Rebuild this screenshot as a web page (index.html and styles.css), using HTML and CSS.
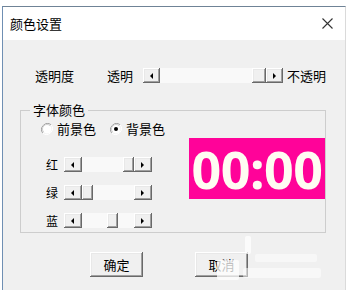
FILE: index.html
```html
<!DOCTYPE html>
<html lang="zh-CN">
<head>
    <meta charset="UTF-8">
    <title>颜色设置</title>
    <link rel="stylesheet" href="styles.css">
</head>
<body>
<div class="window">
    <div class="titlebar">
        <span class="title">颜色设置</span>
        <span class="close">
            <svg width="11" height="11" viewBox="0 0 11 11"><path d="M0.5 0.5L10.5 10.5M10.5 0.5L0.5 10.5" stroke="#333" stroke-width="1.1" fill="none"/></svg>
        </span>
    </div>
    <div class="content">
        <!--透明度-->
        <div class="opacity-row">
            <span class="opacity-label">透明度</span>
            <span class="end-label">透明</span>
            <div class="scrollbar wide">
                <span class="sb-btn"><i class="arrow-left"></i></span>
                <span class="track"><span class="thumb thumb-end"></span></span>
                <span class="sb-btn"><i class="arrow-right"></i></span>
            </div>
            <span class="end-label after">不透明</span>
        </div>
        <!--字体颜色-->
        <fieldset class="group">
            <legend>字体颜色</legend>
            <div class="group-body">
                <div class="controls">
                    <div class="radios">
                        <label class="radio">
                            <svg width="12" height="12" viewBox="0 0 12 12">
                                <path d="M10.2 1.8A6 6 0 0 0 1.8 10.2" stroke="#a0a0a0" fill="none"/>
                                <path d="M1.8 10.2A6 6 0 0 0 10.2 1.8" stroke="#fff" fill="none"/>
                                <circle cx="6" cy="6" r="4.5" fill="#fff"/>
                                <path d="M9.2 2.8A4.5 4.5 0 0 0 2.8 9.2" stroke="#d0d0d0" fill="none"/>
                            </svg>
                            前景色
                        </label>
                        <label class="radio checked">
                            <svg width="12" height="12" viewBox="0 0 12 12">
                                <path d="M10.2 1.8A6 6 0 0 0 1.8 10.2" stroke="#a0a0a0" fill="none"/>
                                <path d="M1.8 10.2A6 6 0 0 0 10.2 1.8" stroke="#fff" fill="none"/>
                                <circle cx="6" cy="6" r="4.5" fill="#fff"/>
                                <path d="M9.2 2.8A4.5 4.5 0 0 0 2.8 9.2" stroke="#d0d0d0" fill="none"/>
                                <circle cx="6" cy="6" r="2" fill="#000"/>
                            </svg>
                            背景色
                        </label>
                    </div>
                    <div class="sliders">
                        <div class="slider-row">
                            <span class="channel">红</span>
                            <div class="scrollbar small">
                                <span class="sb-btn"><i class="arrow-left"></i></span>
                                <span class="track"><span class="thumb" style="margin-left: 41px"></span></span>
                                <span class="sb-btn"><i class="arrow-right"></i></span>
                            </div>
                        </div>
                        <div class="slider-row">
                            <span class="channel">绿</span>
                            <div class="scrollbar small">
                                <span class="sb-btn"><i class="arrow-left"></i></span>
                                <span class="track"><span class="thumb" style="margin-left: 0px"></span></span>
                                <span class="sb-btn"><i class="arrow-right"></i></span>
                            </div>
                        </div>
                        <div class="slider-row">
                            <span class="channel">蓝</span>
                            <div class="scrollbar small">
                                <span class="sb-btn"><i class="arrow-left"></i></span>
                                <span class="track"><span class="thumb" style="margin-left: 25px"></span></span>
                                <span class="sb-btn"><i class="arrow-right"></i></span>
                            </div>
                        </div>
                    </div>
                </div>
                <div class="preview">00:00</div>
            </div>
        </fieldset>
        <div class="actions">
            <button class="btn">确定</button>
            <button class="btn">取消</button>
        </div>
        <!--水印-->
        <div class="watermark">
            <span class="wm wm1"></span>
            <span class="wm wm2"></span>
            <span class="wm wm3"></span>
            <span class="wm wm4"></span>
        </div>
    </div>
</div>
</body>
</html>
```

FILE: styles.css
```css
*{
    margin:0;
    padding:0;
    box-sizing: border-box;
}
body{
    background: #fff;
    font-family: "Noto Sans CJK SC", "Noto Sans", sans-serif;
    font-size: 13px;
    color: #000;
}
.window{
    margin: 6px 0 0 2px;
    width: 344px;
    height: 284px;
    border-top: 1px solid #6f8396;
    border-left: 1px solid #6f8fb3;
    border-right: 1px solid #dadada;
    display: flex;
    flex-direction: column;
}
.titlebar{
    height: 33px;
    background: #fff;
    display: flex;
    align-items: center;
    justify-content: space-between;
    padding: 0 12px 0 7px;
}
.title{
    font-size: 13px;
    line-height: 16px;
}
.close{
    display: flex;
}
.content{
    flex: 1;
    background: #f0f0f0;
    position: relative;
}
.opacity-row{
    display: flex;
    align-items: center;
    height: 15px;
    margin-top: 28px;
    padding-left: 32px;
    line-height: 15px;
}
.opacity-label{
    width: 72px;
}
.end-label{
    width: 36px;
}
.end-label.after{
    width: auto;
    margin-left: 4px;
}
.scrollbar{
    display: flex;
    height: 15px;
}
.scrollbar.wide{
    width: 140px;
}
.scrollbar.small{
    width: 88px;
}
.sb-btn,.thumb,.btn{
    background: #f0f0f0;
    box-shadow: inset -1px -1px #696969, inset 1px 1px #fff, inset -2px -2px #a0a0a0, inset 2px 2px #e8e8e8;
}
.sb-btn{
    width: 17px;
    display: flex;
    align-items: center;
    justify-content: center;
    flex-shrink: 0;
}
.small .sb-btn{
    width: 18px;
}
.track{
    flex: 1;
    display: flex;
    background: #f9f9f9;
}
.thumb{
    width: 11px;
    height: 15px;
}
.wide .thumb{
    width: 14px;
}
.thumb-end{
    margin-left: auto;
}
.arrow-left{
    width: 0;
    height: 0;
    border-top: 3px solid transparent;
    border-bottom: 3px solid transparent;
    border-right: 3px solid #000;
    margin-left: -1px;
}
.arrow-right{
    width: 0;
    height: 0;
    border-top: 3px solid transparent;
    border-bottom: 3px solid transparent;
    border-left: 3px solid #000;
    margin-left: -1px;
}
.group{
    margin: 20px 0 0 17px;
    width: 306px;
    border: 1px solid #cdcdcd;
    padding: 0;
}
.group legend{
    margin-left: 9px;
    padding: 0 3px;
    line-height: 14px;
    font-size: 13px;
}
.group-body{
    display: flex;
}
.controls{
    width: 168px;
    padding: 6px 0 4px;
}
.radios{
    display: flex;
    height: 12px;
    padding-left: 20px;
}
.radio{
    display: flex;
    align-items: center;
    gap: 4px;
    line-height: 12px;
    width: 69px;
}
.sliders{
    margin-top: 22px;
    display: flex;
    flex-direction: column;
    gap: 13px;
}
.slider-row{
    display: flex;
    align-items: center;
    height: 15px;
}
.channel{
    width: 43px;
    padding-left: 25px;
    font-size: 12px;
    line-height: 15px;
}
.preview{
    width: 136px;
    height: 61px;
    margin-top: 21px;
    background: #ff0399;
    color: #fffcf2;
    font-family: "Noto Sans", sans-serif;
    font-weight: bold;
    font-size: 52px;
    line-height: 61px;
    text-align: center;
    letter-spacing: -0.5px;
}
.actions{
    display: flex;
    gap: 52px;
    margin-top: 19px;
    padding-left: 87px;
}
.btn{
    width: 53px;
    height: 25px;
    border: none;
    font-family: "Noto Sans CJK SC", sans-serif;
    font-size: 13px;
    color: #000;
}
.wm{
    position: absolute;
    background: rgba(255,255,255,0.75);
    border-radius: 2px;
}
.wm1{
    left: 214px;
    top: 220px;
    width: 22px;
    height: 20px;
}
.wm2{
    left: 242px;
    top: 196px;
    width: 6px;
    height: 18px;
}
.wm3{
    left: 252px;
    top: 214px;
    width: 62px;
    height: 8px;
    background: rgba(255,255,255,0.45);
}
.wm4{
    left: 240px;
    top: 228px;
    width: 78px;
    height: 10px;
    background: rgba(255,255,255,0.5);
}
```
